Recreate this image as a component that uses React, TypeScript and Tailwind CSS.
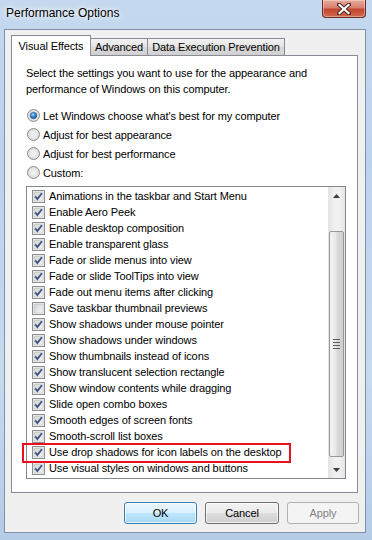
const items: [string, boolean][] = [
  ['Animations in the taskbar and Start Menu', true],
  ['Enable Aero Peek', true],
  ['Enable desktop composition', true],
  ['Enable transparent glass', true],
  ['Fade or slide menus into view', true],
  ['Fade or slide ToolTips into view', true],
  ['Fade out menu items after clicking', true],
  ['Save taskbar thumbnail previews', false],
  ['Show shadows under mouse pointer', true],
  ['Show shadows under windows', true],
  ['Show thumbnails instead of icons', true],
  ['Show translucent selection rectangle', true],
  ['Show window contents while dragging', true],
  ['Slide open combo boxes', true],
  ['Smooth edges of screen fonts', true],
  ['Smooth-scroll list boxes', true],
  ['Use drop shadows for icon labels on the desktop', true],
  ['Use visual styles on windows and buttons', true],
];

const radios = [
  "Let Windows choose what's best for my computer",
  'Adjust for best appearance',
  'Adjust for best performance',
  'Custom:',
];

function CheckBox({ checked }: { checked: boolean }) {
  return (
    <svg width="13" height="13" viewBox="0 0 13 13" className="shrink-0">
      <defs>
        <linearGradient id="cbFill" x1="0" y1="0" x2="1" y2="1">
          <stop offset="0" stopColor="#cfd1d4" />
          <stop offset="1" stopColor="#f7f7f7" />
        </linearGradient>
      </defs>
      <rect x="0.5" y="0.5" width="12" height="12" fill="#f4f4f4" stroke="#8e8f8f" />
      <rect x="2" y="2" width="9" height="9" fill="url(#cbFill)" stroke="#b9bcc0" strokeWidth="0.6" />
      {checked && (
        <path d="M3.2 6.4 L5.4 9 L9.8 3.2" fill="none" stroke="#3f5484" strokeWidth="1.9" strokeLinejoin="miter" />
      )}
    </svg>
  );
}

function Radio({ selected }: { selected: boolean }) {
  return (
    <svg width="13" height="13" viewBox="0 0 13 13" className="shrink-0">
      <defs>
        <radialGradient id="rdFill" cx="0.5" cy="0.5" r="0.6">
          <stop offset="0" stopColor="#f8f8f8" />
          <stop offset="1" stopColor="#d2d3d5" />
        </radialGradient>
        <radialGradient id="rdDot" cx="0.4" cy="0.35" r="0.7">
          <stop offset="0" stopColor="#9fd6ff" />
          <stop offset="0.6" stopColor="#2a78c4" />
          <stop offset="1" stopColor="#1b4f8a" />
        </radialGradient>
      </defs>
      <circle cx="6.5" cy="6.5" r="6" fill="url(#rdFill)" stroke="#8e8f8f" />
      {selected && <circle cx="6.5" cy="6.5" r="3.3" fill="url(#rdDot)" stroke="#28507e" strokeWidth="0.5" />}
    </svg>
  );
}

export default function App() {
  return (
    <div className="w-[372px] h-[540px] flex flex-col overflow-hidden bg-[linear-gradient(180deg,#c4d9ef_0%,#bcd3ec_30%,#c6daf0_70%,#b4cce6_100%)] font-['Liberation_Sans',Arial,sans-serif] text-[11px] tracking-[-0.1px] leading-[16px] text-black">
      {/* title bar */}
      <div className="h-[29px] flex items-start shrink-0">
        <span className="pl-[6px] pt-[5px] text-[12px] tracking-normal [text-shadow:0_0_8px_#ffffff,0_0_4px_#ffffff]">Performance Options</span>
        <div className="ml-auto mr-[6px] w-[44px] h-[18px] rounded-b-[4px] border border-t-0 border-[#6d2a22] bg-[linear-gradient(180deg,#e9a99b_0%,#d7806f_45%,#c2452f_55%,#d26a4f_100%)] flex items-center justify-center shadow-[inset_0_0_0_1px_rgba(255,255,255,0.35)]">
          <svg width="14" height="12" viewBox="0 0 14 12">
            <path d="M2 1.5 L12 10.5 M12 1.5 L2 10.5" stroke="#4a2520" strokeWidth="4" strokeLinecap="square" />
            <path d="M2.5 2 L11.5 10 M11.5 2 L2.5 10" stroke="#ffffff" strokeWidth="2.2" strokeLinecap="square" />
          </svg>
        </div>
      </div>

      {/* client area */}
      <div className="h-[504px] ml-[4px] mr-[6px] bg-[#f0f0f0] border border-[#7f90a6] flex flex-col">
        {/* tabs */}
        <div className="flex items-end h-[21px] mt-[5px] ml-[6px] relative z-10 whitespace-nowrap">
          <div className="w-[80px] h-[21px] bg-white border border-b-0 border-[#898c95] flex items-center justify-center pb-[1px]">
            Visual Effects
          </div>
          <div className="w-[58px] h-[17px] mb-[1px] -ml-px border border-b-0 border-[#898c95] bg-[linear-gradient(180deg,#f2f2f2,#e3e3e3_50%,#dbdbdb_50%,#d0d0d0)] flex items-center justify-center">
            Advanced
          </div>
          <div className="w-[138px] h-[17px] mb-[1px] -ml-px border border-b-0 border-[#898c95] bg-[linear-gradient(180deg,#f2f2f2,#e3e3e3_50%,#dbdbdb_50%,#d0d0d0)] flex items-center justify-center">
            Data Execution Prevention
          </div>
        </div>

        {/* panel */}
        <div className="relative -mt-px ml-[6px] mr-[7px] h-[438px] bg-white border border-[#898c95] pl-[14px] pt-[9px]">
          <p>
            Select the settings you want to use for the appearance and
            <br />
            performance of Windows on this computer.
          </p>

          <div className="mt-[9px] flex flex-col">
            {radios.map((r, i) => (
              <div key={r} className="h-[19px] flex items-center gap-[3px] pl-[1px]">
                <Radio selected={i === 0} />
                <span>{r}</span>
              </div>
            ))}
          </div>

          {/* list box */}
          <div className="mt-[4px] w-[320px] h-[293px] border border-[#828790] bg-white flex">
            <div className="flex-1 pt-[1px] pl-[5px]">
              {items.map(([label, checked]) => (
                <div key={label} className="h-[16px] flex items-center gap-[4px] whitespace-nowrap">
                  <CheckBox checked={checked} />
                  <span>{label}</span>
                </div>
              ))}
            </div>
            {/* scrollbar */}
            <div className="w-[17px] flex flex-col bg-[linear-gradient(90deg,#e3e3e3,#f0f0f0_40%,#f0f0f0_70%,#e5e5e5)]">
              <div className="h-[17px] flex items-center justify-center">
                <svg width="7" height="4" viewBox="0 0 7 4"><path d="M0 4 L3.5 0 L7 4 Z" fill="#3c3c3c" /></svg>
              </div>
              <div className="h-[27px]" />
              <div className="h-[226px] mx-[1px] rounded-[2px] border border-[#979797] bg-[linear-gradient(90deg,#f4f4f4,#e8e8e8_45%,#d9d9d9_55%,#cfcfcf)] flex flex-col items-center justify-center gap-[2px]">
                <div className="w-[7px] h-px bg-[#5c5c5c]" />
                <div className="w-[7px] h-px bg-[#5c5c5c]" />
                <div className="w-[7px] h-px bg-[#5c5c5c]" />
                <div className="w-[7px] h-px bg-[#5c5c5c]" />
              </div>
              <div className="flex-1" />
              <div className="h-[17px] flex items-center justify-center">
                <svg width="7" height="4" viewBox="0 0 7 4"><path d="M0 0 L3.5 4 L7 0 Z" fill="#3c3c3c" /></svg>
              </div>
            </div>
          </div>

          {/* highlight annotation */}
          <div className="absolute left-[10px] top-[387px] w-[269px] h-[20px] border-[2.5px] border-[#e8111d]" />
        </div>

        {/* buttons */}
        <div className="flex justify-end gap-[8px] mt-[9px] mr-[6px]">
          <button className="w-[73px] h-[22px] rounded-[3px] border border-[#3c7fb1] bg-[linear-gradient(180deg,#eaf6fd,#d9f0fc_50%,#bee6fd_50%,#a7d9f5)] shadow-[inset_0_0_0_1px_rgba(255,255,255,0.7)]">
            OK
          </button>
          <button className="w-[74px] h-[22px] rounded-[3px] border border-[#707070] bg-[linear-gradient(180deg,#f2f2f2,#ebebeb_50%,#dddddd_50%,#cfcfcf)] shadow-[inset_0_0_0_1px_rgba(255,255,255,0.7)]">
            Cancel
          </button>
          <button className="w-[72px] h-[22px] rounded-[3px] border border-[#adb2b5] bg-[#f4f4f4] text-[#838383]">
            Apply
          </button>
        </div>
      </div>
    </div>
  );
}
